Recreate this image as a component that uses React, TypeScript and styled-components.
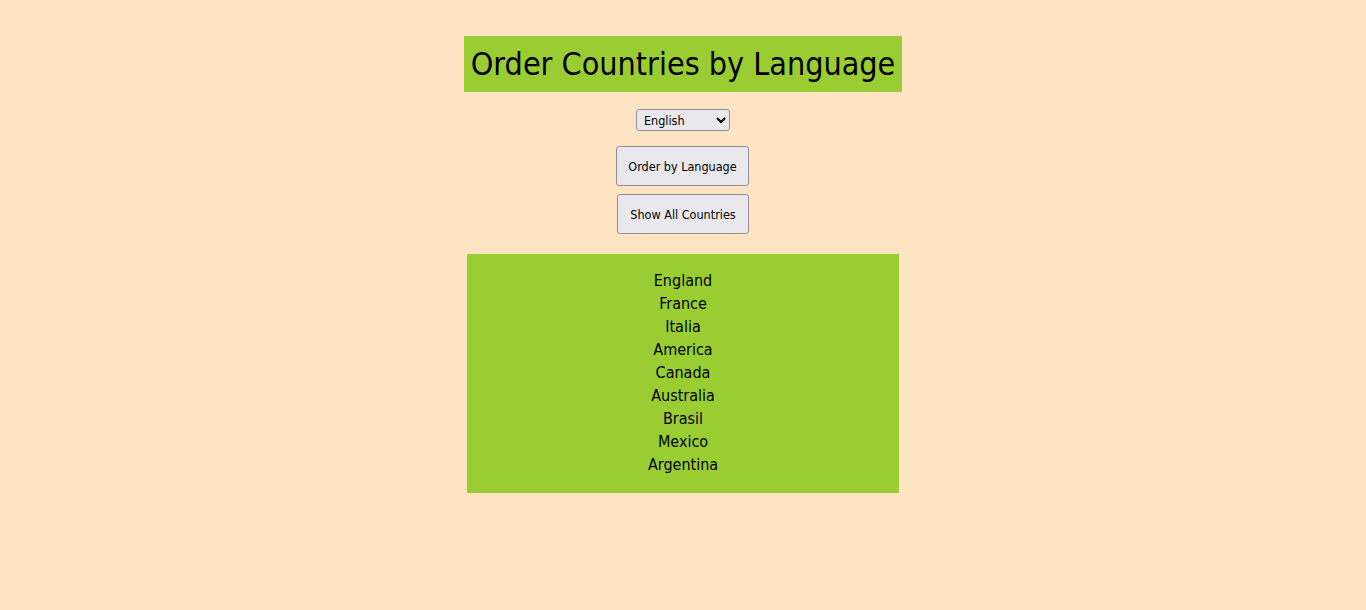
import React, { FC, useState } from 'react';
import styled, { createGlobalStyle } from 'styled-components';

const GlobalStyle = createGlobalStyle`
  html, body {
    margin: 0;
    background-color: bisque;
    font-family: "DejaVu Sans Condensed", "DejaVu Sans", sans-serif;
  }
`;

const Page = styled.main`
  display: flex;
  flex-direction: column;
  align-items: center;
  padding-top: 36px;
`;

const Title = styled.h1`
  margin: 0;
  padding: 0 7px;
  height: 56px;
  line-height: 56px;
  font-size: 32px;
  font-weight: 400;
  background-color: yellowgreen;
  color: #000;
`;

const Select = styled.select`
  margin-top: 17px;
  width: 94px;
  height: 22px;
  padding-left: 3px;
  font-family: "DejaVu Sans Condensed", "DejaVu Sans", sans-serif;
  font-size: 12.5px;
  background-color: #e9e9ed;
  border: 1px solid #8f8f9d;
  border-radius: 3px;
`;

const Button = styled.button<{ $w: number }>`
  margin-top: 15px;
  margin-right: 1px;
  width: ${({ $w }) => $w}px;
  height: 40px;
  font-family: "DejaVu Sans Condensed", "DejaVu Sans", sans-serif;
  font-size: 12.5px;
  color: #000;
  background-color: #e9e9ed;
  border: 1px solid #8f8f9d;
  border-radius: 3px;

  & + & {
    margin-top: 8px;
    margin-right: 0;
  }
`;

const List = styled.ul`
  list-style: none;
  margin: 20px 0 0;
  padding: 15px 0 17px;
  width: 432px;
  background-color: yellowgreen;
  text-align: center;
`;

const Country = styled.li`
  font-size: 16px;
  line-height: 23px;
`;

const countries = [
  'England',
  'France',
  'Italia',
  'America',
  'Canada',
  'Australia',
  'Brasil',
  'Mexico',
  'Argentina',
];

const App: FC = () => {
  const [lang, setLang] = useState('English');

  return (
    <>
      <GlobalStyle />
      <Page>
        <Title>Order Countries by Language</Title>
        <Select value={lang} onChange={(e) => setLang(e.target.value)}>
          <option>English</option>
          <option>French</option>
          <option>Italian</option>
          <option>Spanish</option>
          <option>Portuguese</option>
        </Select>
        <Button $w={133}>Order by Language</Button>
        <Button $w={132}>Show All Countries</Button>
        <List>
          {countries.map((c) => (
            <Country key={c}>{c}</Country>
          ))}
        </List>
      </Page>
    </>
  );
};

export default App;
